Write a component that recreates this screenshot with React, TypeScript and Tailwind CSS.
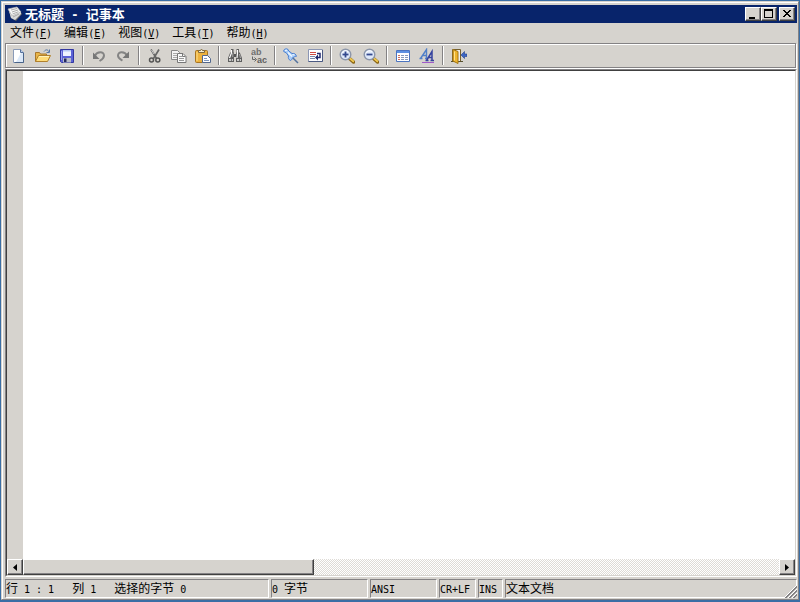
import React from 'react';
import clsx from 'clsx';

const RAISED =
  'border border-t-white border-l-white border-r-[#404040] border-b-[#404040] bg-[#d6d3ce] shadow-[inset_-1px_-1px_0_#848284]';

// CJK glyphs are 12px wide and the latin cells are half of that
function Mixed({ text, big = false }: { text: string; big?: boolean }) {
  const parts = text.match(/[\u4e00-\u9fff]+|[^\u4e00-\u9fff]+/g) ?? [];
  return (
    <>
      {parts.map((part, i) =>
        /[\u4e00-\u9fff]/.test(part) ? (
          <span key={i}>{part}</span>
        ) : (
          <span key={i} className={clsx("font-['DejaVu_Sans_Mono',monospace]", big ? 'text-[12px]' : 'text-[10px]')}>
            {part}
          </span>
        ),
      )}
    </>
  );
}

function Svg({ children }: { children: React.ReactNode }) {
  return (
    <svg width="16" height="16" viewBox="0 0 16 16" fill="none" aria-hidden="true">
      {children}
    </svg>
  );
}

const Binocular = () => (
  <>
    <path d="M4 1h2.500v3L7 5v9H1v-4l2-5 1-1zM9.500 1H12v3l1 1 2 5v4H9V5l.5-1z" fill="#5f5f5f" />
    <path d="M6.500 6h3v3h-3z" fill="#555" />
    <path d="M4.500 2v3l-2 5M10.500 2v3l-.5 5" stroke="#fff" strokeWidth="1.200" />
    <path d="M5.800 5v4M12.500 6l1 4" stroke="#aaa" />
    <path d="M2 11h4v2H2zM10 11h4v2h-4z" fill="#c9c9c9" />
    <path d="M4.500 11v2M12.500 11v2" stroke="#777" />
  </>
);

const Magnifier = ({ plus }: { plus: boolean }) => (
  <>
    <path d="M10.500 10.500l4 3.500" stroke="#8a6414" strokeWidth="3.500" strokeLinecap="round" />
    <path d="M10.800 10.300l3.500 3" stroke="#f0c850" strokeWidth="1.800" strokeLinecap="round" />
    <circle cx="6.500" cy="6.500" r="5.300" fill="#dfe9fa" stroke="#8c96aa" strokeWidth="1.400" />
    <path d="M3 5.500a4 4 0 0 1 6-2" stroke="#fff" />
    <path d="M3.500 6.500h6" stroke="#34498e" strokeWidth="1.800" />
    {plus && <path d="M6.500 3.500v6" stroke="#34498e" strokeWidth="1.800" />}
  </>
);

const ICONS: Record<string, React.ReactNode> = {
  新建: (
    <>
      <path d="M2.500 1.500h7l3 3v10h-10z" fill="#fff" stroke="#8a9bb8" />
      <path d="M10 5h2v9H5z" fill="#dbe8f8" />
      <path d="M9.500 1.500v3h3" fill="#bcd0ea" stroke="#55709a" />
      <path d="M12.500 5v9.500h-9" stroke="#4a6489" />
    </>
  ),
  打开: (
    <>
      <path d="M9 3.500c2-2.500 4-2 5 .5M14.500 1.500v3h-3" stroke="#5577a8" />
      <path d="M.5 13.500v-9h4l1 1.500h6v2" fill="#e8b547" stroke="#a9762a" />
      <path d="M.5 13.500l3-6h12l-3 6z" fill="#ffdc78" stroke="#b0802c" />
      <path d="M4 8.500h10" stroke="#fff3bd" />
    </>
  ),
  保存: (
    <>
      <path d="M1.500 1.500h13v13h-12l-1-1z" fill="#5b62d6" stroke="#3337a0" />
      <path d="M4 2h8v6H4z" fill="#eef3ff" />
      <path d="M4 2h8v1.500H4z" fill="#b7c8f4" />
      <path d="M4 10h8v4.500H4z" fill="#b8bcc8" />
      <path d="M5 10.500h2.500V14H5z" fill="#23285f" />
      <path d="M2.500 3v9" stroke="#98a0f0" />
    </>
  ),
  撤销: (
    <>
      <path d="M4 7.500C6 3.500 13 3 13 7.500c0 3-2 4-4.500 5.500" stroke="#848484" strokeWidth="2" />
      <path d="M2 4.500V11h6.500z" fill="#777" />
    </>
  ),
  重做: (
    <>
      <path d="M12 7.500C10 3.500 3 3 3 7.500c0 3 2 3.500 4.500 5" stroke="#848484" strokeWidth="2" />
      <path d="M14 3.500V10H7.500z" fill="#777" />
    </>
  ),
  剪切: (
    <>
      <path d="M4 1.500l5.500 9M12 1.500l-5.500 9" stroke="#666" strokeWidth="1.700" />
      <path d="M4.500 2l2.500 4" stroke="#ccc" />
      <circle cx="4.500" cy="12" r="2" stroke="#555" strokeWidth="1.500" />
      <circle cx="10.800" cy="12" r="2" stroke="#555" strokeWidth="1.500" />
    </>
  ),
  复制: (
    <>
      <path d="M.5 2.500h6l2 2v7h-8z" fill="#f4f4f4" stroke="#888" />
      <path d="M2 5.500h4M2 7.500h4M2 9.500h4" stroke="#aaa" />
      <path d="M6.500 5.500h5.500l3 3v6H6.500z" fill="#fafafa" stroke="#777" />
      <path d="M11.500 5.500v3h3" stroke="#777" />
      <path d="M8 8.500h3M8 10.500h5M8 12.500h5" stroke="#999" />
    </>
  ),
  粘贴: (
    <>
      <rect x=".5" y="2.500" width="12" height="12" rx="1" fill="#edb23e" stroke="#a87421" />
      <path d="M2 4v9" stroke="#ffe08c" />
      <path d="M3.500 4.500v-2h2a1 1 0 0 1 2 0h2v2z" fill="#f4edd4" stroke="#806a3c" />
      <path d="M7.500 7.500h5l3 3v4h-8z" fill="#fff" stroke="#52688f" />
      <path d="M9 10.500h3M9 12.500h5" stroke="#7e96bf" />
    </>
  ),
  查找: <Binocular />,
  替换: (
    <>
      <text x="0" y="7" fontSize="9" fontWeight="bold" fill="#707070" fontFamily="Liberation Sans">
        ab
      </text>
      <text x="6" y="15" fontSize="9" fontWeight="bold" fill="#606060" fontFamily="Liberation Sans">
        ac
      </text>
      <path d="M1.500 8.500v3h3M3.500 9.500l2 2-2 2" stroke="#666" />
    </>
  ),
  置顶: (
    <>
      <path d="M9.500 9.500l5.500 5.500" stroke="#54739f" strokeWidth="1.500" />
      <path
        d="M.7 3.500C.5 1.500 2 .5 4.500 1l1.300 2 3.200 2.500c2.500-.5 4.500 1 4.300 3-1.500-.5-2 .8-3.500 1-.8 1.500-1 2.500-2.300 3C5.500 11.500 5 10 5.500 8L3.500 5z"
        fill="#a9cdf9"
        stroke="#4a7fd0"
      />
      <path d="M2 2.500l2-.3M5 4.500l4 4M9.500 6.500l2 .5" stroke="#f2f9ff" strokeWidth="1.200" />
    </>
  ),
  自动换行: (
    <>
      <path d="M1.500 1.500h14v12h-14z" fill="#fdfdff" stroke="#8b96b4" />
      <path d="M15.500 2v11.500H1.500" stroke="#4b5a82" />
      <path d="M3 4.500h6M3 6.500h6" stroke="#cf4a42" />
      <path d="M3 8.500h5M3 10.500h5" stroke="#7a86a8" />
      <path d="M10 5.500h3v4h-3" stroke="#20286e" strokeWidth="1.500" />
      <path d="M11 6.500v6L8 9.500z" fill="#20286e" />
    </>
  ),
  放大: <Magnifier plus />,
  缩小: <Magnifier plus={false} />,
  列表: (
    <>
      <path d="M1.500 2.500h13v11h-13z" fill="#fff" stroke="#4c74c0" />
      <path d="M2 3h12v2H2z" fill="#5e91e2" />
      <path d="M3 7.500h2M3 9.500h2M3 11.500h2" stroke="#ce6b5a" />
      <path d="M6 7.500h3M6 9.500h3M6 11.500h3M10 7.500h3M10 9.500h3M10 11.500h3" stroke="#879bbd" />
    </>
  ),
  字体: (
    <>
      <path d="M.5 10.500h3M1.500 10.500L7.500 1.500v9M6 10.500h3M4 7.500h4" stroke="#4f7fc8" strokeWidth="1.400" />
      <path d="M6.500 12.500h3M7.500 12.500l5.500-9v9M11.500 12.500h3.500M9.500 9.500h4" stroke="#34429f" strokeWidth="1.500" />
      <path d="M3 14.500h12" stroke="#a05ac8" />
    </>
  ),
  退出: (
    <>
      <path d="M1.500 13.500v-12h8v12" fill="#eee" stroke="#75602f" />
      <path d="M0 13.500h12" stroke="#57502e" />
      <path d="M2 1.500l5 2v12l-5-2.500z" fill="#efb52e" stroke="#a37512" />
      <path d="M3.500 3.500v9" stroke="#ffe28d" />
      <path d="M10 7l3.500-3.500V6H16v2.500h-2.500v2z" fill="#3d65c4" stroke="#24418e" strokeWidth=".6" />
    </>
  ),
};

const TOOL_GROUPS = [
  ['新建', '打开', '保存'],
  ['撤销', '重做'],
  ['剪切', '复制', '粘贴'],
  ['查找', '替换'],
  ['置顶', '自动换行'],
  ['放大', '缩小'],
  ['列表', '字体'],
  ['退出'],
];

const MENUS = [
  ['文件', 'F'],
  ['编辑', 'E'],
  ['视图', 'V'],
  ['工具', 'T'],
  ['帮助', 'H'],
];

const STATUS = [
  { text: '行 1 : 1   列 1   选择的字节 0', width: 'w-[264px]' },
  { text: '0 字节', width: 'w-[97px]' },
  { text: 'ANSI', width: 'w-[67px]' },
  { text: 'CR+LF', width: 'w-[37px]' },
  { text: 'INS', width: 'w-[25px]' },
  { text: '文本文档', width: 'flex-1' },
];

function TitleBar() {
  const caption = clsx(RAISED, 'flex h-[14px] w-4 items-center justify-center');
  return (
    <header className="flex h-[18px] shrink-0 items-center bg-[#08246b] pr-0.5 pl-0.5 text-white">
      <Svg>
        <path d="M2 5l9-3 4 6-6 7-5-3z" fill="#666" />
        <path d="M1 3l9-2 4 5-9 4z" fill="#f6f6f6" stroke="#b5b5b5" strokeWidth=".7" />
        <path d="M2 5l3 5 9-4v2l-6 6-4-2z" fill="#d9d9d9" />
        <path d="M4 4l6-1.500M5 6l6-2M5.500 8l6-2.300M6 11l6-3" stroke="#999" strokeWidth=".8" />
      </Svg>
      <h1 className="ml-0.5 flex-1 text-[13px] leading-[18px] font-bold whitespace-pre">
        <Mixed text="无标题 - 记事本" big />
      </h1>
      <div className="flex">
        <button className={caption} aria-label="最小化">
          <svg width="12" height="10" viewBox="0 0 12 10">
            <path d="M2 8h6v2H2z" />
          </svg>
        </button>
        <button className={caption} aria-label="最大化">
          <svg width="12" height="10" viewBox="0 0 12 10">
            <path d="M1 0h9v9H1zM2 2v6h7V2z" fillRule="evenodd" />
          </svg>
        </button>
        <button className={clsx(caption, 'ml-0.5')} aria-label="关闭">
          <svg width="12" height="10" viewBox="0 0 12 10" shapeRendering="crispEdges">
            <path d="M2 1h2v1h1v1h2V2h1V1h2v1H9v1H8v1H7v1h1v1h1v1h1v1H8V7H7V6H5v1H4v1H2V7h1V6h1V5h1V4H4V3H3V2H2z" />
          </svg>
        </button>
      </div>
    </header>
  );
}

export default function App() {
  return (
    <div className="h-screen bg-[#3a6ea5] p-px pb-0.5 font-['Noto_Sans_CJK_SC',sans-serif] text-[12px] text-black">
      <div className="flex h-full flex-col border border-[#d6d3ce] border-r-[#848284] border-b-[#848284] bg-[#d6d3ce] pt-[3px] pr-px pl-[3px] shadow-[inset_1px_1px_0_#fff]">
        <TitleBar />

        <nav className="flex h-5 shrink-0 items-center gap-3 pl-[5px]">
          {MENUS.map(([label, key]) => (
            <button key={key} className="leading-5 whitespace-nowrap">
              {label}
              <span className="font-['DejaVu_Sans_Mono',monospace] text-[10px]">
                (<u>{key}</u>)
              </span>
            </button>
          ))}
        </nav>

        <div className="mr-px flex h-[25px] shrink-0 items-center border border-[#848284] pl-px shadow-[inset_1px_1px_0_#fff,1px_1px_0_#fff]">
          {TOOL_GROUPS.map((group, i) => (
            <React.Fragment key={i}>
              {i > 0 && <div className="mx-[3px] h-[19px] w-0.5 border-r border-l border-r-white border-l-[#848284]" />}
              {group.map((name) => (
                <button key={name} title={name} aria-label={name} className="flex h-[22px] w-6 items-center justify-center">
                  <Svg>{ICONS[name]}</Svg>
                </button>
              ))}
            </React.Fragment>
          ))}
        </div>

        <main className="mt-px flex min-h-0 flex-1 flex-col border border-t-[#848284] border-r-white border-b-white border-l-[#848284]">
          <div className="flex min-h-0 flex-1 flex-col border border-t-[#404040] border-r-[#d6d3ce] border-b-[#d6d3ce] border-l-[#404040]">
            <div className="flex min-h-0 flex-1">
              <div className="w-4 bg-[#d6d3ce]" />
              <textarea aria-label="文本" className="flex-1 resize-none bg-white outline-none" />
            </div>
            <div className="flex h-4 shrink-0 bg-[repeating-conic-gradient(#dedbd6_0_25%,#fff_0_50%)] bg-[length:2px_2px]">
              <button className={clsx(RAISED, 'flex w-4 items-center justify-center')} aria-label="向左滚动">
                <svg width="4" height="7" viewBox="0 0 4 7">
                  <path d="M4 0v7L0 3.500z" />
                </svg>
              </button>
              <div className={clsx(RAISED, 'w-[291px]')} />
              <button className={clsx(RAISED, 'ml-auto flex w-4 items-center justify-center')} aria-label="向右滚动">
                <svg width="4" height="7" viewBox="0 0 4 7">
                  <path d="M0 0v7l4-3.500z" />
                </svg>
              </button>
            </div>
          </div>
        </main>

        <footer className="relative mt-0.5 mb-px flex h-[19px] shrink-0 gap-0.5">
          {STATUS.map(({ text, width }) => (
            <div
              key={text}
              className={clsx(
                width,
                'overflow-hidden border border-t-[#848284] border-r-white border-b-white border-l-[#848284] leading-[15px] whitespace-pre',
              )}
            >
              <Mixed text={text} />
            </div>
          ))}
          <svg className="absolute right-0 bottom-0 bg-[#d6d3ce]" width="13" height="13" viewBox="0 0 13 13">
            <path d="M0 13L13 0M4 13l9-9M8 13l5-5" stroke="#fff" />
            <path d="M1 13L13 1M2 13L13 2M5 13l8-8M6 13l7-7M9 13l4-4M10 13l3-3" stroke="#848284" />
          </svg>
        </footer>
      </div>
    </div>
  );
}
